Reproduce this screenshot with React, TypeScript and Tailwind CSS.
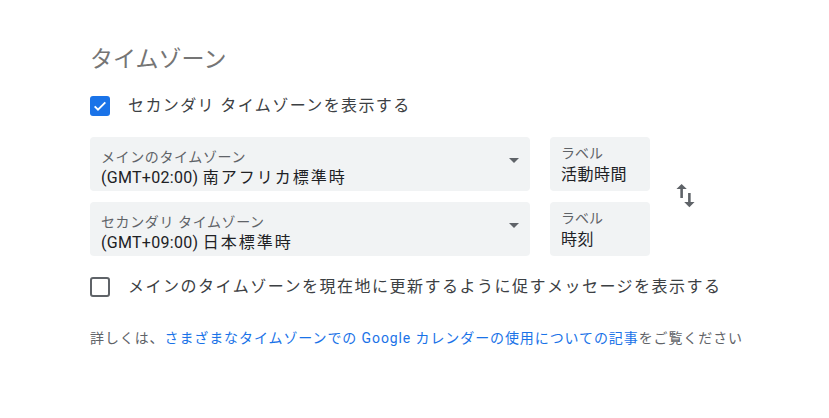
const font = "font-['Roboto','Noto_Sans_CJK_JP',sans-serif]";

const Checkbox = ({ checked }: { checked: boolean }) =>
  checked ? (
    <div className="w-5 h-5 rounded-[3px] bg-[#1a73e8] flex items-center justify-center shrink-0">
      <svg width="16" height="16" viewBox="0 0 24 24">
        <path d="M4 12.5l5 5L20 6.5" fill="none" stroke="white" strokeWidth="2.8" />
      </svg>
    </div>
  ) : (
    <div className="w-5 h-5 rounded-[3px] border-2 border-[#5f6368] shrink-0" />
  );

const ZoneSelect = ({ label, offset, zone }: { label: string; offset: string; zone: string }) => (
  <div className="relative w-[440px] h-[54px] rounded-[4px] bg-[#f1f3f4] pl-[11px] pt-[10px]">
    <div className="text-[14px] leading-[20px] text-[#5f6368] tracking-[0.6px]">{label}</div>
    <div className="text-[16px] leading-[22px] text-[#202124] tracking-[0.3px]">
      {offset} <span className="tracking-[2px]">{zone}</span>
    </div>
    <svg className="absolute right-[4px] top-[11px]" width="24" height="24" viewBox="0 0 24 24">
      <path d="M7 10l5 5 5-5z" fill="#5f6368" />
    </svg>
  </div>
);

const LabelBox = ({ value }: { value: string }) => (
  <div className="w-[100px] h-[54px] rounded-[4px] bg-[#f1f3f4] pl-[11px] pt-[6px]">
    <div className="text-[14px] leading-[20px] text-[#5f6368]">ラベル</div>
    <div className="text-[16px] leading-[24px] text-[#202124] tracking-[0.5px]">{value}</div>
  </div>
);

export default function App() {
  return (
    <div className={`${font} w-[829px] h-[418px] bg-white pl-[90px] pt-[44px]`}>
      <h2 className="text-[23px] leading-[32px] font-normal text-[#757575]">タイムゾーン</h2>

      <div className="flex items-center gap-[18px] mt-[18px] h-6">
        <Checkbox checked />
        <span className="text-[16px] text-[#3c4043] tracking-[1.4px]">セカンダリ タイムゾーンを表示する</span>
      </div>

      <div className="flex items-center mt-[19px]">
        <div className="flex flex-col gap-[11px]">
          <div className="flex gap-[20px]">
            <ZoneSelect label="メインのタイムゾーン" offset="(GMT+02:00)" zone="南アフリカ標準時" />
            <LabelBox value="活動時間" />
          </div>
          <div className="flex gap-[20px]">
            <ZoneSelect label="セカンダリ タイムゾーン" offset="(GMT+09:00)" zone="日本標準時" />
            <LabelBox value="時刻" />
          </div>
        </div>
        <svg className="ml-[20px] -mt-[2px]" width="31" height="31" viewBox="0 0 24 24">
          <path
            d="M16 17.01V10h-2v7.01h-3L15 21l4-3.99h-3zM9 3L5 6.99h3V14h2V6.99h3L9 3z"
            fill="#5f6368"
          />
        </svg>
      </div>

      <div className="flex items-center gap-[18px] mt-[19px] h-6">
        <Checkbox checked={false} />
        <span className="text-[16px] text-[#3c4043] tracking-[1.5px]">
          メインのタイムゾーンを現在地に更新するように促すメッセージを表示する
        </span>
      </div>

      <p className="mt-[29px] text-[14px] leading-[20px] text-[#5f6368] tracking-[0.9px]">
        詳しくは、
        <a className="text-[#1a73e8]">さまざまなタイムゾーンでの Google カレンダーの使用についての記事</a>
        をご覧ください
      </p>
    </div>
  );
}
